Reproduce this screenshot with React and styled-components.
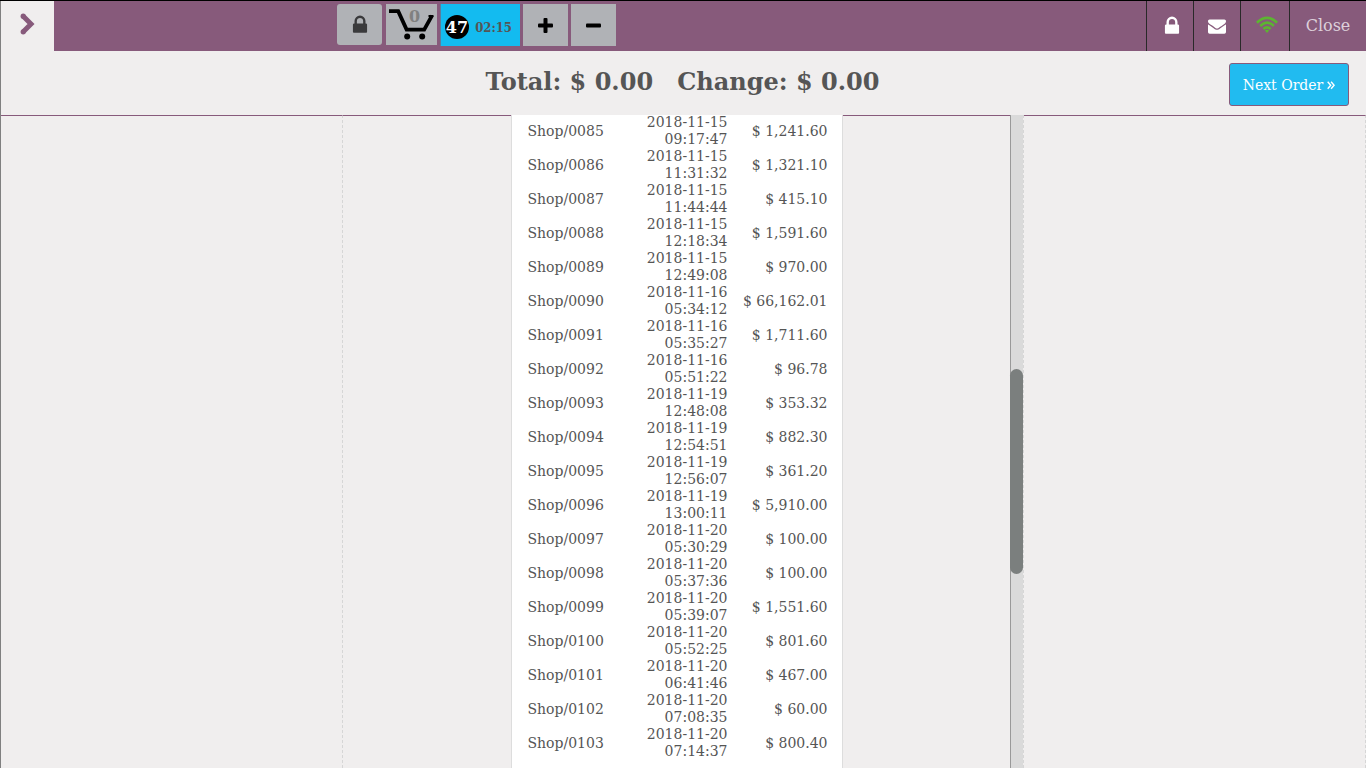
import React from "react";
import styled, { createGlobalStyle } from "styled-components";

const GlobalStyle = createGlobalStyle`
  * { box-sizing: border-box; }
  body {
    margin: 0;
    background: #f0eeee;
    color: #555555;
    font-family: "DejaVu Serif", serif;
    font-size: 14px;
  }
  button { font-family: inherit; cursor: pointer; }
`;

const Page = styled.div`
  height: 100vh;
  display: flex;
  flex-direction: column;
  overflow: hidden;
  border-top: 1px solid #000000;
`;

const TopBar = styled.header`
  height: 50px;
  flex: none;
  display: flex;
  align-items: stretch;
  background: #875a7b;
`;

const MenuButton = styled.button`
  width: 54px;
  border: 0;
  border-left: 1px solid #808080;
  padding: 0 0 4px;
  background: #f0eeee;
  display: flex;
  align-items: center;
  justify-content: center;
`;

const Tools = styled.div`
  margin-left: 283px;
  padding-top: 3px;
  display: flex;
  align-items: flex-start;
  flex: 1;
`;

const ToolButton = styled.button`
  width: ${(p) => p.$width || 45}px;
  height: ${(p) => p.$height || 42}px;
  margin-right: ${(p) => p.$gap}px;
  padding: 0;
  border: 0;
  border-radius: ${(p) => p.$radius || 0}px;
  background: #b0b2b6;
  color: #000000;
  display: flex;
  align-items: center;
  justify-content: center;
`;

const CartWrap = styled.span`
  position: relative;
  display: flex;
`;

const CartCount = styled.span`
  position: absolute;
  top: 0;
  left: 3px;
  width: 100%;
  text-align: center;
  font-size: 16px;
  line-height: 18px;
  font-weight: bold;
  color: #808080;
`;

const OrderTab = styled.button`
  width: 80px;
  height: 42px;
  margin-right: 3px;
  padding: 4px 8px 0 4px;
  border: 0;
  border-left: 1px solid #5b7d9c;
  background: #13bbf0;
  color: #555555;
  display: flex;
  align-items: center;
  justify-content: space-between;
  font-size: 13px;
  font-weight: bold;
`;

const OrderTime = styled.span`
  font-family: "DejaVu Serif Condensed", "DejaVu Serif", serif;
`;

const OrderNumber = styled.span`
  width: 24px;
  height: 24px;
  border-radius: 50%;
  background: #000000;
  color: #ffffff;
  font-size: 16px;
  line-height: 26px;
  display: flex;
  justify-content: center;
`;

const StatusButton = styled.button`
  width: ${(p) => p.$width || 47}px;
  padding: 0 0 ${(p) => p.$lift || 0}px ${(p) => p.$indent || 0}px;
  border: 0;
  border-left: 1px solid #292929;
  background: transparent;
  color: #ddd0da;
  font-size: 16px;
  display: flex;
  align-items: center;
  justify-content: center;
`;

const Summary = styled.section`
  height: 64px;
  flex: none;
  padding: 0 17px 0 0;
  border-left: 1px solid #808080;
  display: grid;
  grid-template-columns: 1fr auto 1fr;
  align-items: center;
`;

const Totals = styled.h1`
  grid-column: 2;
  margin: 0;
  padding: 0 0 2px 15px;
  display: flex;
  gap: 24px;
  font-size: 24px;
  line-height: 28px;
`;

const NextButton = styled.button`
  justify-self: end;
  width: 120px;
  height: 43px;
  margin-top: 3px;
  padding: 0;
  border: 1px solid #875a7b;
  border-radius: 3px;
  background: #21bbf0;
  color: #ffffff;
  font-size: 14px;
  display: flex;
  align-items: center;
  justify-content: center;
  gap: 4px;
`;

const Columns = styled.main`
  flex: 1;
  min-height: 0;
  display: grid;
  grid-template-columns: 1fr calc(50% - 2px) 1fr;
  border-left: 1px solid #808080;
`;

const SideColumn = styled.div`
  border-top: 1px solid #875a7b;
  border-right: 1px dashed #d6d6d6;
`;

const Center = styled.div`
  min-height: 0;
  display: flex;
  border-right: 1px dashed #d6d6d6;
`;

const Gutter = styled.div`
  flex: 1;
  border-top: 1px solid #875a7b;
`;

const Receipt = styled.div`
  width: 332px;
  flex: none;
  padding: 0 14px 0 16px;
  overflow: hidden;
  background: #ffffff;
  border: solid #dddddd;
  border-width: 0 1px;
`;

const Orders = styled.table`
  width: 100%;
  margin-top: -1px;
  border-collapse: collapse;
  table-layout: fixed;
  line-height: 17px;
`;

const NameCell = styled.td`
  width: 100px;
  padding: 0;
`;

const DateCell = styled.td`
  width: 100px;
  padding: 0 0 0 16px;
  text-align: right;
`;

const AmountCell = styled.td`
  width: 100px;
  padding: 0;
  text-align: right;
`;

const ScrollTrack = styled.div`
  width: 13px;
  flex: none;
  padding-top: 254px;
  background: #dadada;
  border-left: 1px solid #999999;
`;

const ScrollThumb = styled.div`
  height: 205px;
  margin-left: -1px;
  border-radius: 7px;
  background: #7b7f7e;
`;

const LockIcon = ({ color }) => (
  <svg width="22" height="22" viewBox="0 0 1792 1792" fill={color} aria-hidden="true">
    <path d="M640 768h512v-192q0-106-75-181t-181-75-181 75-75 181v192zm832 96v576q0 40-28 68t-68 28h-960q-40 0-68-28t-28-68v-576q0-40 28-68t68-28h32v-192q0-184 132-316t316-132 316 132 132 316v192h32q40 0 68 28t28 68z" />
  </svg>
);

const EnvelopeIcon = () => (
  <svg width="18" height="18" viewBox="0 0 1792 1792" fill="#ffffff" aria-hidden="true">
    <path d="M1792 710v794q0 66-47 113t-113 47h-1472q-66 0-113-47t-47-113v-794q44 49 101 87 362 246 497 345 57 42 92.5 65.5t94.5 48 110 24.5h2q51 0 110-24.5t94.5-48 92.5-65.5q170-123 498-345 57-39 100-87zm0-294q0 79-49 151t-122 123q-376 261-468 325-10 7-42.5 31t-54 38.5-52 32.5-57.5 27-50 9h-2q-23 0-50-9t-57.5-27-52-32.5-54-38.5-42.5-31q-91-64-262-182.5t-205-142.5q-62-42-117-115.5t-55-136.5q0-78 41.5-130t118.5-52h1472q65 0 112.5 47t47.5 113z" />
  </svg>
);

const WifiIcon = () => (
  <svg width="22" height="18" viewBox="0 0 22 18" fill="none" stroke="#5cb531" strokeWidth="2.7" aria-hidden="true">
    <path d="M0.9 6.7Q11 -2.9 21.1 6.7" />
    <path d="M4.2 9.9Q11 3.5 17.8 9.9" />
    <path d="M7.4 13Q11 9.8 14.6 13" />
    <path d="M8.9 14.6Q11 13 13.1 14.6L11 17Z" fill="#5cb531" stroke="none" />
  </svg>
);

const ChevronIcon = () => (
  <svg width="16" height="22" viewBox="0 0 16 22" fill="none" stroke="#875a7b" strokeWidth="5" aria-hidden="true">
    <path d="M3 3L11 11L3 19" />
    <circle cx="3.2" cy="3.2" r="2.6" fill="#875a7b" stroke="none" />
    <circle cx="3.2" cy="18.8" r="2.6" fill="#875a7b" stroke="none" />
  </svg>
);

const CartIcon = () => (
  <svg width="45" height="34" viewBox="0 0 45 34" fill="none" stroke="#000000" aria-hidden="true">
    <path d="M0 3.2H9.2L17.6 21.6H35.2L43 7.6" strokeWidth="3.8" />
    <path d="M39.5 8H44.5" strokeWidth="2" />
    <circle cx="18.2" cy="28.6" r="3" fill="#000000" stroke="none" />
    <circle cx="33.2" cy="28.6" r="3" fill="#000000" stroke="none" />
  </svg>
);

const SignIcon = ({ plus }) => (
  <svg width="15" height="15" viewBox="0 0 15 15" fill="#000000" aria-hidden="true">
    <rect x="0" y="5.5" width="15" height="4" rx="1" />
    {plus && <rect x="5.5" y="0" width="4" height="15" rx="1" />}
  </svg>
);

const DoubleAngleIcon = () => (
  <svg width="8" height="10" viewBox="0 0 8 10" fill="none" stroke="#ffffff" strokeWidth="1.4" aria-hidden="true">
    <path d="M0.7 1.7L3.7 5.2L0.7 8.7M4.1 1.7L7.1 5.2L4.1 8.7" />
  </svg>
);

const orders = [
  ["Shop/0085", "2018-11-15", "09:17:47", "$ 1,241.60"],
  ["Shop/0086", "2018-11-15", "11:31:32", "$ 1,321.10"],
  ["Shop/0087", "2018-11-15", "11:44:44", "$ 415.10"],
  ["Shop/0088", "2018-11-15", "12:18:34", "$ 1,591.60"],
  ["Shop/0089", "2018-11-15", "12:49:08", "$ 970.00"],
  ["Shop/0090", "2018-11-16", "05:34:12", "$ 66,162.01"],
  ["Shop/0091", "2018-11-16", "05:35:27", "$ 1,711.60"],
  ["Shop/0092", "2018-11-16", "05:51:22", "$ 96.78"],
  ["Shop/0093", "2018-11-19", "12:48:08", "$ 353.32"],
  ["Shop/0094", "2018-11-19", "12:54:51", "$ 882.30"],
  ["Shop/0095", "2018-11-19", "12:56:07", "$ 361.20"],
  ["Shop/0096", "2018-11-19", "13:00:11", "$ 5,910.00"],
  ["Shop/0097", "2018-11-20", "05:30:29", "$ 100.00"],
  ["Shop/0098", "2018-11-20", "05:37:36", "$ 100.00"],
  ["Shop/0099", "2018-11-20", "05:39:07", "$ 1,551.60"],
  ["Shop/0100", "2018-11-20", "05:52:25", "$ 801.60"],
  ["Shop/0101", "2018-11-20", "06:41:46", "$ 467.00"],
  ["Shop/0102", "2018-11-20", "07:08:35", "$ 60.00"],
  ["Shop/0103", "2018-11-20", "07:14:37", "$ 800.40"],
];

export default function App() {
  return (
    <Page>
      <GlobalStyle />
      <TopBar>
        <MenuButton aria-label="Open menu"><ChevronIcon /></MenuButton>
        <Tools>
          <ToolButton $height={41} $gap={4} $radius={3} aria-label="Lock register">
            <LockIcon color="#3a3a3c" />
          </ToolButton>
          <ToolButton $width={51} $height={41} $gap={3} aria-label="Cart">
            <CartWrap>
              <CartIcon />
              <CartCount>0</CartCount>
            </CartWrap>
          </ToolButton>
          <OrderTab>
            <OrderNumber>47</OrderNumber>
            <OrderTime>02:15</OrderTime>
          </OrderTab>
          <ToolButton $gap={3} aria-label="Add order"><SignIcon plus /></ToolButton>
          <ToolButton $gap={0} aria-label="Remove order"><SignIcon /></ToolButton>
        </Tools>
        <StatusButton $indent={4} aria-label="Lock"><LockIcon color="#ffffff" /></StatusButton>
        <StatusButton aria-label="Messages"><EnvelopeIcon /></StatusButton>
        <StatusButton $width={49} $indent={4} $lift={2} aria-label="Connection"><WifiIcon /></StatusButton>
        <StatusButton $width={77} $lift={2}>Close</StatusButton>
      </TopBar>
      <Summary>
        <Totals>
          <span>Total: $ 0.00</span>
          <span>Change: $ 0.00</span>
        </Totals>
        <NextButton>Next Order <DoubleAngleIcon /></NextButton>
      </Summary>
      <Columns>
        <SideColumn />
        <Center>
          <Gutter />
          <Receipt>
            <Orders>
              <tbody>
                {orders.map(([name, date, time, amount]) => (
                  <tr key={name}>
                    <NameCell>{name}</NameCell>
                    <DateCell>{date} {time}</DateCell>
                    <AmountCell>{amount}</AmountCell>
                  </tr>
                ))}
              </tbody>
            </Orders>
          </Receipt>
          <Gutter />
          <ScrollTrack><ScrollThumb /></ScrollTrack>
        </Center>
        <SideColumn />
      </Columns>
    </Page>
  );
}
